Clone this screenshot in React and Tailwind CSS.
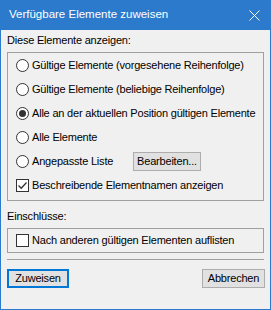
import React from 'react';

const font = { fontFamily: '"Liberation Sans", Arial, sans-serif' };

function Radio({ checked, label, children, labelClass = '' }) {
  return (
    <div className="flex h-[24px] items-center pl-[8px]">
      <span className="flex h-[13px] w-[13px] shrink-0 items-center justify-center rounded-full border border-[#333333] bg-white">
        {checked && <span className="h-[7px] w-[7px] rounded-full bg-[#333333]" />}
      </span>
      <span className={`ml-[3px] whitespace-nowrap text-[11px] leading-none tracking-[-0.2px] text-black ${labelClass}`}>{label}</span>
      {children}
    </div>
  );
}

function Check({ checked, label }) {
  return (
    <div className="flex h-[24px] items-center pl-[8px]">
      <span className="flex h-[13px] w-[13px] shrink-0 items-center justify-center border border-[#333333] bg-white">
        {checked && (
          <svg width="11" height="11" viewBox="0 0 11 11">
            <path d="M1.5 5.5 L4.2 8.2 L9.5 2.5" fill="none" stroke="#333" strokeWidth="1.3" />
          </svg>
        )}
      </span>
      <span className="ml-[3px] whitespace-nowrap text-[11px] leading-none tracking-[-0.2px] text-black">{label}</span>
    </div>
  );
}

export default function App() {
  return (
    <div className="flex h-[310px] w-[271px] flex-col bg-[#2b7acb] px-px pb-px" style={font}>
      {/* Title bar */}
      <div className="flex h-[30px] shrink-0 items-center justify-between pl-[8px] pr-[10px]">
        <span className="text-[11.5px] text-white">Verfügbare Elemente zuweisen</span>
        <svg width="11" height="11" viewBox="0 0 11 11">
          <path d="M0.5 0.5 L10.5 10.5 M10.5 0.5 L0.5 10.5" stroke="white" strokeWidth="1" />
        </svg>
      </div>

      <div className="flex flex-1 flex-col bg-[#f0f0f0] px-[6px] pt-[2px] text-[11px] tracking-[-0.2px]">
        <div className="flex h-[16px] items-center text-black">Diese Elemente anzeigen:</div>

        <div className="mt-[4px] flex h-[149px] w-[257px] flex-col border border-[#a0a0a0] pb-[3px]">
          <Radio label="Gültige Elemente (vorgesehene Reihenfolge)" />
          <Radio label="Gültige Elemente (beliebige Reihenfolge)" />
          <Radio checked label="Alle an der aktuellen Position gültigen Elemente" />
          <Radio label="Alle Elemente" />
          <Radio label="Angepasste Liste" labelClass="w-[100px]">
            <button className="ml-px flex h-[19px] w-[68px] items-center justify-center border border-[#adadad] bg-[#e1e1e1] text-black">
              Bearbeiten...
            </button>
          </Radio>
          <Check checked label="Beschreibende Elementnamen anzeigen" />
        </div>

        <div className="mt-[7px] flex h-[16px] items-center text-black">Einschlüsse:</div>

        <div className="mt-[4px] flex h-[25px] w-[257px] flex-col justify-center border border-[#a0a0a0]">
          <Check label="Nach anderen gültigen Elementen auflisten" />
        </div>

        <div className="mt-[6px] h-px w-[257px] bg-[#a0a0a0]" />

        <div className="mt-[9px] flex w-[258px] justify-between">
          <button className="flex h-[19px] w-[62px] items-center justify-center border-2 border-[#0078d7] bg-[#e1e1e1] text-black">
            Zuweisen
          </button>
          <button className="flex h-[19px] w-[63px] items-center justify-center border border-[#adadad] bg-[#e1e1e1] text-black">
            Abbrechen
          </button>
        </div>
      </div>
    </div>
  );
}
